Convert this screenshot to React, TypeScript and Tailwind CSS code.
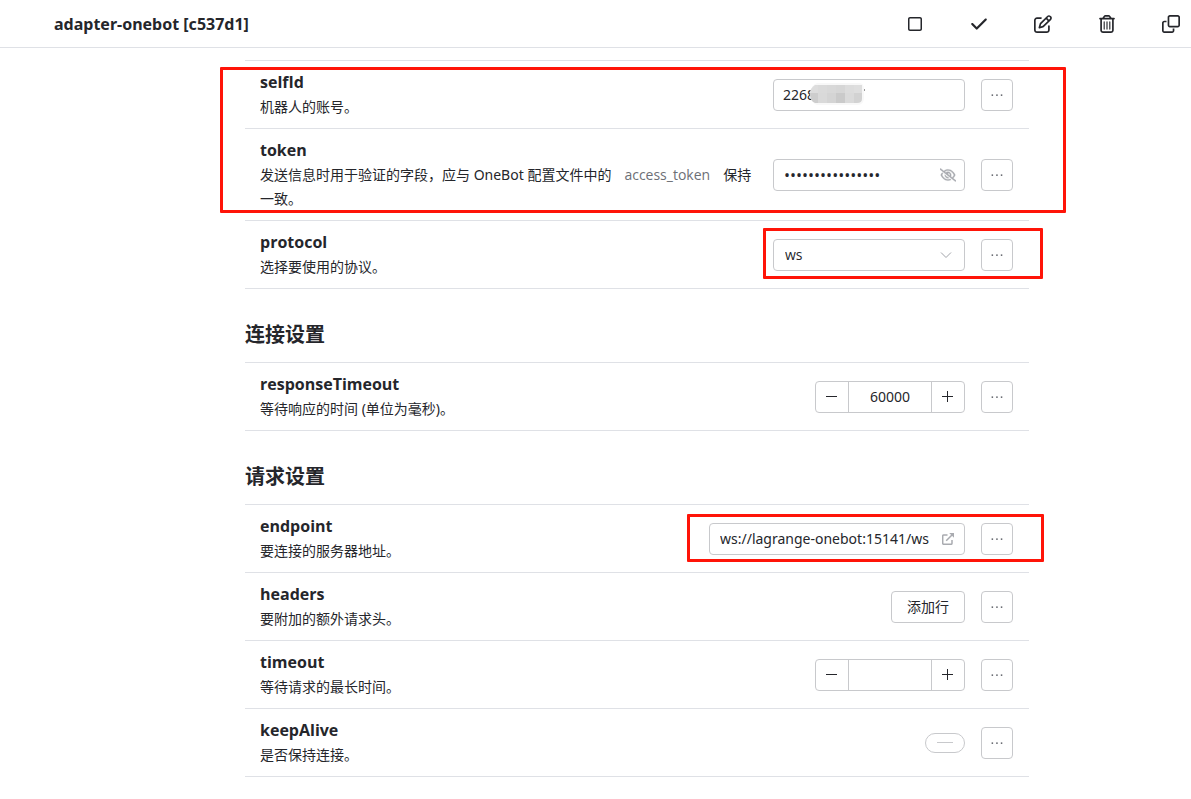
import clsx from "clsx";
import type { ReactNode } from "react";
import {
	FaCheck,
	FaRegClone,
	FaRegEyeSlash,
	FaRegPenToSquare,
	FaRegSquare,
	FaRegTrashCan,
} from "react-icons/fa6";

const mosaic = [
	["#dddddd", "#dadada", "#d8d8d8", "#d6d6d6", "#dcdcdc", "#dedede"],
	["#cdcdcd", "#d9d9d9", "#d4d4d4", "#cacaca", "#dadada", "#d2d2d2"],
];

const actions = [
	{ label: "Stop", icon: <FaRegSquare className="size-4" /> },
	{ label: "Save", icon: <FaCheck className="size-[18px]" /> },
	{ label: "Rename", icon: <FaRegPenToSquare className="size-[18px]" /> },
	{ label: "Remove", icon: <FaRegTrashCan className="size-[18px]" /> },
	{ label: "Clone", icon: <FaRegClone className="size-[18px]" /> },
];

function Highlight({ className }: { className: string }) {
	return (
		<div
			className={clsx(
				"absolute pointer-events-none border-3 border-[#ff1408] rounded-[1px]",
				className,
			)}
		/>
	);
}

function MoreButton() {
	return (
		<button
			type="button"
			aria-label="More"
			className="size-8 shrink-0 flex items-center justify-center border border-[#c8c9cc] rounded"
		>
			<svg className="w-3 h-3" viewBox="0 0 12 12" fill="#5c5f66">
				<rect x="0.6" y="5.4" width="1.5" height="1.5" />
				<rect x="5.2" y="5.4" width="1.5" height="1.5" />
				<rect x="9.8" y="5.4" width="1.5" height="1.5" />
			</svg>
		</button>
	);
}

interface RowProps {
	name: string;
	description: ReactNode;
	highlight?: string;
	children: ReactNode;
}

function Row({ name, description, highlight, children }: RowProps) {
	return (
		<div className="flex items-center justify-between gap-4 pl-[15px] pr-4 py-2 border-b border-[#dfe1e6]">
			<div className="min-w-0 pb-px">
				<label
					htmlFor={name}
					className="block text-base leading-[26px] font-bold"
				>
					{name}
				</label>
				<p className="text-sm leading-6 font-['Noto_Sans','Noto_Sans_CJK_SC',sans-serif]">
					{description}
				</p>
			</div>
			<div className="relative shrink-0 flex items-center gap-4">
				{children}
				<MoreButton />
				{highlight && <Highlight className={highlight} />}
			</div>
		</div>
	);
}

function SectionTitle({ children }: { children: ReactNode }) {
	return (
		<h2 className="pt-[29px] pb-[10px] text-xl leading-[34px] font-bold border-b border-[#dfe1e6]">
			{children}
		</h2>
	);
}

function NumberInput({ id, value }: { id: string; value: string }) {
	return (
		<div className="flex w-[150px] h-8 border border-[#c8c9cc] rounded overflow-hidden">
			<button
				type="button"
				aria-label="Decrease"
				className="w-8 flex items-center justify-center"
			>
				<svg className="w-3 h-3" viewBox="0 0 12 12" stroke="#25262b">
					<path d="M0 5.5H11" />
				</svg>
			</button>
			<input
				id={id}
				type="text"
				inputMode="numeric"
				defaultValue={value}
				className="flex-1 min-w-0 border-x border-[#c8c9cc] font-['Noto_Sans',sans-serif] text-sm text-center outline-none"
			/>
			<button
				type="button"
				aria-label="Increase"
				className="w-8 flex items-center justify-center"
			>
				<svg className="w-3 h-3" viewBox="0 0 12 12" stroke="#25262b">
					<path d="M0 5.5H11M5.5 0V11" />
				</svg>
			</button>
		</div>
	);
}

export default function App() {
	return (
		<div className="min-h-screen overflow-hidden bg-white text-[#25262b] font-['Open_Sans','Noto_Sans_CJK_SC',sans-serif]">
			<header className="flex items-center h-12 pl-[54px] border-b border-[#dfe1e6]">
				<h1 className="flex-1 text-base font-bold font-['Noto_Sans',sans-serif]">
					adapter-onebot [c537d1]
				</h1>
				<div className="-mr-3 flex">
					{actions.map((action) => (
						<button
							key={action.label}
							type="button"
							aria-label={action.label}
							className="w-16 h-12 flex items-center justify-center"
						>
							{action.icon}
						</button>
					))}
				</div>
			</header>

			<main className="pl-[83px] pt-3">
				<form className="mx-auto max-w-[784px]">
					<div className="relative border-t border-[#dfe1e6]">
						<Row name="selfId" description="机器人的账号。">
							<div className="relative">
								<input
									id="selfId"
									type="text"
									defaultValue="2268"
									className="block w-48 h-8 px-[9px] font-['Noto_Sans',sans-serif] text-sm border border-[#c8c9cc] rounded outline-none"
								/>
								<svg
									className="absolute left-9 top-1 w-[58px] h-6"
									viewBox="0 0 58 24"
								>
									<defs>
										<clipPath id="smudge">
											<path d="M6 2H53V16Q53 20 48 20H6Q1 18 1 11Q1 5 6 2Z" />
										</clipPath>
									</defs>
									<path
										d="M8 0H50Q55 0 55 6V16Q54 22 48 22H8Q2 20 1 11Q2 2 8 0Z"
										fill="#f8f8f8"
									/>
									<g clipPath="url(#smudge)">
										{mosaic.map((line, y) =>
											line.map((color, x) => (
												<rect
													key={`${x}-${y}`}
													x={x * 9}
													y={y * 10}
													width="9"
													height="10"
													fill={color}
												/>
											)),
										)}
									</g>
									<rect x="55" y="6" width="1" height="2" fill="#9a9a9a" />
								</svg>
							</div>
						</Row>
						<Row
							name="token"
							description={
								<>
									发送信息时用于验证的字段，应与 OneBot 配置文件中的
									<code className="px-[13px] font-['Open_Sans',sans-serif] text-[#6d6f76]">
										access_token
									</code>
									保持一致。
								</>
							}
						>
							<div className="relative">
								<input
									id="token"
									type="password"
									defaultValue="0123456789abcdef"
									className="block w-48 h-8 pl-[10px] pr-8 text-base border border-[#c8c9cc] rounded outline-none"
								/>
								<button
									type="button"
									aria-label="Show token"
									className="absolute right-[9px] top-2 text-[#a9abb0]"
								>
									<FaRegEyeSlash
										className="size-4"
										stroke="currentColor"
										strokeWidth="16"
									/>
								</button>
							</div>
						</Row>
						<Highlight className="-left-[25px] -right-[37px] top-[6px] bottom-2" />
					</div>
					<Row
						name="protocol"
						description="选择要使用的协议。"
						highlight="-left-[10px] -right-[30px] -top-[11px] -bottom-2"
					>
						<div className="relative">
							<select
								id="protocol"
								className="block w-48 h-8 px-[11px] text-sm border border-[#c8c9cc] rounded bg-white appearance-none outline-none"
							>
								<option>ws</option>
								<option>ws-reverse</option>
							</select>
							<svg
								className="absolute right-[13px] top-[10px] w-3 h-3 pointer-events-none"
								viewBox="0 0 12 12"
								fill="none"
								stroke="#a0a2a8"
							>
								<path d="M1 3.5L6 8.5L11 3.5" />
							</svg>
						</div>
					</Row>

					<SectionTitle>连接设置</SectionTitle>
					<Row
						name="responseTimeout"
						description="等待响应的时间 (单位为毫秒)。"
					>
						<NumberInput id="responseTimeout" value="60000" />
					</Row>

					<SectionTitle>请求设置</SectionTitle>
					<Row
						name="endpoint"
						description="要连接的服务器地址。"
						highlight="-left-[22px] -right-[31px] -top-[9px] -bottom-[7px]"
					>
						<div className="relative">
							<input
								id="endpoint"
								type="text"
								defaultValue="ws://lagrange-onebot:15141/ws"
								className="block w-64 h-8 pl-[10px] pr-7 font-['Noto_Sans',sans-serif] text-sm border border-[#c8c9cc] rounded outline-none"
							/>
							<a
								href="#endpoint"
								aria-label="Open endpoint"
								className="absolute right-[11px] top-[10px] text-[#a9abb0]"
							>
								<svg
									className="w-3 h-3"
									viewBox="0 0 12 12"
									fill="none"
									stroke="currentColor"
									strokeWidth="1.5"
								>
									<path d="M5.5 2H1.7Q0.7 2 0.7 3V10.3Q0.7 11.3 1.7 11.3H9Q10 11.3 10 10.3V7" />
									<path d="M4.2 7.8L10 2" />
									<path d="M7.2 0H12V4.8Z" fill="currentColor" stroke="none" />
								</svg>
							</a>
						</div>
					</Row>
					<Row name="headers" description="要附加的额外请求头。">
						<button
							id="headers"
							type="button"
							className="h-8 px-[15px] text-sm leading-none border border-[#c8c9cc] rounded"
						>
							添加行
						</button>
					</Row>
					<Row name="timeout" description="等待请求的最长时间。">
						<NumberInput id="timeout" value="" />
					</Row>
					<Row name="keepAlive" description="是否保持连接。">
						<div className="relative flex items-center justify-center">
							<input
								id="keepAlive"
								type="checkbox"
								role="switch"
								className="w-10 h-5 border border-[#c8c9cc] rounded-full appearance-none"
							/>
							<span className="absolute w-4 h-px bg-[#c8c9cc] pointer-events-none" />
						</div>
					</Row>
				</form>
			</main>
		</div>
	);
}
